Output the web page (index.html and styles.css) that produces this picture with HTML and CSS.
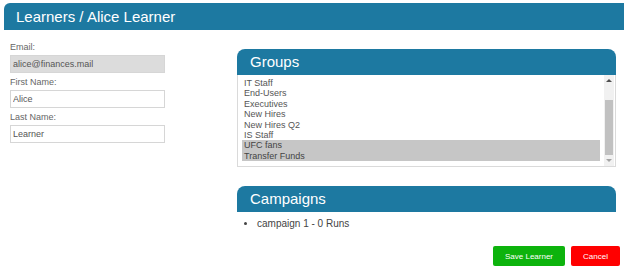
FILE: index.html
```html
<!DOCTYPE html>
<html>
<head>
	<title>Learners / Alice Learner</title>
	<link rel="stylesheet" href="styles.css">
</head>
<body>
	<header class="page-title">Learners / Alice Learner</header>
	<main class="layout">
		<form class="learner-form">
			<label class="field-label">Email:</label>
			<input class="field-input locked" type="text" value="alice@finances.mail" readonly>
			<label class="field-label">First Name:</label>
			<input class="field-input" type="text" value="Alice">
			<label class="field-label">Last Name:</label>
			<input class="field-input" type="text" value="Learner">
		</form>
		<section class="side">
			<div class="panel">
				<h2 class="panel-head">Groups</h2>
				<div class="listbox">
					<div class="list-items">
						<div class="list-item">IT Staff</div>
						<div class="list-item">End-Users</div>
						<div class="list-item">Executives</div>
						<div class="list-item">New Hires</div>
						<div class="list-item">New Hires Q2</div>
						<div class="list-item">IS Staff</div>
						<div class="list-item selected">UFC fans</div>
						<div class="list-item selected">Transfer Funds</div>
					</div>
					<div class="scrollbar">
						<span class="arrow up"></span>
						<span class="thumb"></span>
						<span class="arrow down"></span>
					</div>
				</div>
			</div>
			<div class="panel campaigns">
				<h2 class="panel-head">Campaigns</h2>
				<ul class="campaign-list">
					<li>campaign 1 - 0 Runs</li>
				</ul>
			</div>
			<div class="actions">
				<button class="btn save" type="button">Save Learner</button>
				<button class="btn cancel" type="button">Cancel</button>
			</div>
		</section>
	</main>
</body>
</html>
```
FILE: styles.css
```css
	body {
		margin: 0;
		padding: 0;
		background: #fff;
		font-family: 'Liberation Sans', Arial, sans-serif;
		color: #555;
	}
	.page-title {
		margin: 3px 0 0 4px;
		height: 27px;
		line-height: 27px;
		padding-left: 12px;
		background: #1d79a1;
		color: #fff;
		font-size: 15px;
		border-radius: 6px 0 0 0;
	}
	.layout {
		display: flex;
		padding: 0 8px 0 10px;
	}
	.learner-form {
		width: 155px;
		margin-top: 12px;
		display: flex;
		flex-direction: column;
	}
	.field-label {
		font-size: 9px;
		line-height: 11px;
		color: #666;
		margin-top: 4px;
	}
	.field-label:first-child {
		margin-top: 0;
	}
	.field-input {
		box-sizing: border-box;
		width: 155px;
		height: 18px;
		margin-top: 2px;
		padding: 0 2px;
		border: 1px solid #d6d6d6;
		font-family: 'Liberation Sans', Arial, sans-serif;
		font-size: 9px;
		color: #555;
	}
	.field-input.locked {
		background: #dcdcdc;
	}
	.side {
		width: 379px;
		margin: 19px 0 0 72px;
	}
	.panel-head {
		margin: 0;
		height: 26px;
		line-height: 26px;
		padding-left: 13px;
		background: #1d79a1;
		color: #fff;
		font-size: 15px;
		font-weight: normal;
		border-radius: 8px 8px 0 0;
	}
	.listbox {
		display: flex;
		height: 92px;
		box-sizing: border-box;
		border: 1px solid #dadada;
		border-top: none;
		overflow: hidden;
	}
	.list-items {
		flex: 1;
		margin: 3px 4px 0 4px;
		font-size: 9px;
		color: #555;
	}
	.list-item {
		height: 10.4px;
		line-height: 10.4px;
		padding-left: 2px;
		white-space: nowrap;
	}
	.list-item.selected {
		background: #c6c6c6;
		color: #444;
	}
	.scrollbar {
		width: 10px;
		margin-right: 1px;
		background: #f1f1f1;
		display: flex;
		flex-direction: column;
		align-items: center;
	}
	.arrow {
		width: 0;
		height: 0;
		border-left: 3px solid transparent;
		border-right: 3px solid transparent;
		margin: 4px 0;
	}
	.arrow.up {
		border-bottom: 3px solid #505050;
	}
	.arrow.down {
		border-top: 3px solid #a3a3a3;
	}
	.thumb {
		width: 8px;
		flex: 1;
		margin-top: 14px;
		background: #c1c1c1;
	}
	.campaigns {
		margin-top: 19px;
	}
	.campaign-list {
		margin: 5px 0 0;
		padding-left: 20px;
		font-size: 10px;
		line-height: 13px;
		color: #444;
	}
	.actions {
		display: flex;
		justify-content: flex-end;
		gap: 6px;
		margin: 16px -4px 0 0;
	}
	.btn {
		height: 20px;
		border: none;
		border-radius: 2px;
		color: #fff;
		font-family: 'Liberation Sans', Arial, sans-serif;
		font-size: 8px;
		padding: 0;
		cursor: pointer;
	}
	.btn.save {
		width: 72px;
		background: #0db30d;
	}
	.btn.cancel {
		width: 49px;
		background: #ff0000;
	}
```
